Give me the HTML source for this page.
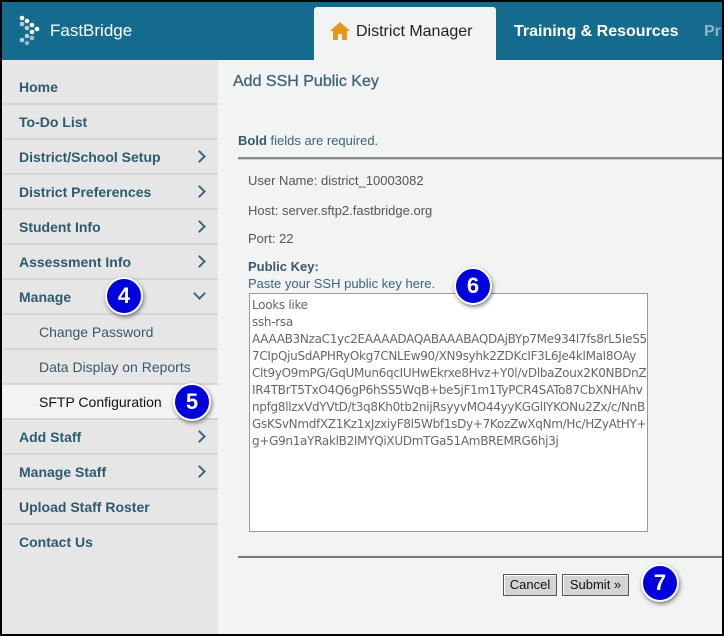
<!DOCTYPE html>
<html><head><meta charset="utf-8"><style>
*{margin:0;padding:0;box-sizing:border-box}
body{width:724px;height:636px;overflow:hidden;background:#000;font-family:"Liberation Sans",sans-serif;position:relative}
#frame{position:absolute;left:2px;top:2px;width:720px;height:632px;background:#f2f3f3;overflow:hidden}
#hdr{position:absolute;left:0;top:0;width:720px;height:58px;background:#156b8e}
.tab{position:absolute;top:5px;left:312px;width:182px;height:53px;background:#f2f3f3;border-radius:3px 3px 0 0}
.abs{position:absolute;white-space:nowrap}
#side{position:absolute;left:0;top:58px;width:216px;height:580px;background:#e6e6e6}
.it{position:absolute;left:0;width:216px;height:35px;border-bottom:2px solid #d6d6d6;font-weight:bold;font-size:14px;color:#2d5a6e;padding-left:17px;line-height:34px}
.sub{font-weight:normal;padding-left:37px;color:#3a5868}
.chev{position:absolute;right:14px;top:12px;width:9px;height:9px;border-right:2px solid #3e6578;border-top:2px solid #3e6578;transform:rotate(45deg)}
.chevd{transform:rotate(135deg);top:9px}
.c{position:absolute;width:38px;height:38px;border-radius:50%;background:#0000dd;border:2px solid #fff;box-shadow:1px 2px 4px rgba(0,0,0,.5);color:#fff;font-size:22px;font-weight:bold;text-align:center;line-height:33px;font-family:"Liberation Sans",sans-serif}
.t{font-size:13px;color:#555}
.btn{position:absolute;height:22px;background:#d4d4d4;border:1px solid #555;box-shadow:inset 1px 1px 0 #fff;font-size:13px;color:#111;text-align:center;line-height:20px}
</style></head><body><div id="frame">
<div id="hdr">
 <svg class="abs" style="left:16px;top:13px" width="26" height="32" viewBox="0 0 26 32">
  <g fill="#fff"><circle cx="4" cy="3" r="2.3"/><circle cx="9" cy="6" r="2.3"/><circle cx="14" cy="10" r="2.3"/><circle cx="19" cy="14" r="2.3"/><circle cx="4" cy="9" r="2.3" opacity=".7"/><circle cx="9" cy="13" r="2.3" opacity=".7"/><circle cx="14" cy="17" r="2.3"/><circle cx="9" cy="21" r="2.3" opacity=".7"/><circle cx="4" cy="25" r="2.3" opacity=".7"/><circle cx="9" cy="28" r="2.3" opacity=".5"/><circle cx="14" cy="23" r="2.3" opacity=".6"/></g></svg>
 <div class="abs" style="left:48px;top:19px;color:#fff;font-size:17px">FastBridge</div>
 <div class="tab"></div>
 <svg class="abs" style="left:328px;top:20px" width="20" height="18" viewBox="0 0 20 18"><path d="M10 0 L20 9 L17 9 L17 18 L12 18 L12 12 L8 12 L8 18 L3 18 L3 9 L0 9 Z" fill="#e8951c"/></svg>
 <div class="abs" style="left:354px;top:21px;font-size:16px;color:#222">District Manager</div>
 <div class="abs" style="left:512px;top:21px;font-size:16px;color:#fff;font-weight:bold">Training &amp; Resources</div>
 <div class="abs" style="left:702px;top:21px;font-size:16px;color:#8fb6c8;font-weight:bold">Pr</div>
</div>
<div id="side">
 <div class="it" style="top:10px">Home</div>
 <div class="it" style="top:45px">To-Do List</div>
 <div class="it" style="top:80px">District/School Setup<span class="chev"></span></div>
 <div class="it" style="top:115px">District Preferences<span class="chev"></span></div>
 <div class="it" style="top:150px">Student Info<span class="chev"></span></div>
 <div class="it" style="top:185px">Assessment Info<span class="chev"></span></div>
 <div class="it" style="top:220px">Manage<span class="chev chevd"></span></div>
 <div class="it sub" style="top:255px">Change Password</div>
 <div class="it sub" style="top:290px">Data Display on Reports</div>
 <div class="it sub" style="top:325px;background:#f3f3f3;color:#111">SFTP Configuration</div>
 <div class="it" style="top:360px">Add Staff<span class="chev"></span></div>
 <div class="it" style="top:395px">Manage Staff<span class="chev"></span></div>
 <div class="it" style="top:430px">Upload Staff Roster</div>
 <div class="it" style="top:465px;border:none">Contact Us</div>
</div>
<div class="abs" style="left:231px;top:71px;font-size:16px;color:#3d6378;-webkit-text-stroke:0.3px #3d6378">Add SSH Public Key</div>
<div class="abs t" style="left:236px;top:131px;color:#3d6378"><b style="color:#2d5a6e">Bold</b> fields are required.</div>
<div class="abs" style="left:236px;top:155px;width:484px;height:3px;border-top:2px solid #8a8a8a;border-bottom:1px solid #ccc"></div>
<div class="abs t" style="left:246px;top:171px">User Name: district_10003082</div>
<div class="abs t" style="left:246px;top:201px">Host: server.sftp2.fastbridge.org</div>
<div class="abs t" style="left:246px;top:229px">Port: 22</div>
<div class="abs t" style="left:246px;top:257px;font-weight:bold;color:#3d5868">Public Key:</div>
<div class="abs t" style="left:246px;top:274px;color:#3d6378">Paste your SSH public key here.</div>
<div class="abs" style="left:247px;top:291px;width:399px;height:239px;background:#fff;border:1px solid #999;padding:3px 2px;font-family:'DejaVu Sans',Verdana,sans-serif;font-size:12px;line-height:17px;color:#666;letter-spacing:-0.3px;overflow:hidden">Looks like<br>ssh-rsa<br>AAAAB3NzaC1yc2EAAAADAQABAAABAQDAjBYp7Me934I7fs8rL5IeS5<br>7CIpQjuSdAPHRyOkg7CNLEw90/XN9syhk2ZDKcIF3L6Je4klMaI8OAy<br>Clt9yO9mPG/GqUMun6qcIUHwEkrxe8Hvz+Y0l/vDlbaZoux2K0NBDnZ<br>IR4TBrT5TxO4Q6gP6hSS5WqB+be5jF1m1TyPCR4SATo87CbXNHAhv<br>npfg8llzxVdYVtD/t3q8Kh0tb2nijRsyyvMO44yyKGGlIYKONu2Zx/c/NnB<br>GsKSvNmdfXZ1Kz1xJzxiyF8l5Wbf1sDy+7KozZwXqNm/Hc/HZyAtHY+<br>g+G9n1aYRaklB2IMYQiXUDmTGa51AmBREMRG6hj3j</div>
<div class="abs" style="left:236px;top:554px;width:484px;height:3px;border-top:2px solid #777"></div>
<div class="btn" style="left:501px;top:572px;width:54px">Cancel</div>
<div class="btn" style="left:560px;top:572px;width:67px">Submit »</div>
<div class="c" style="left:103px;top:275px">4</div>
<div class="c" style="left:171px;top:381px">5</div>
<div class="c" style="left:452px;top:265px">6</div>
<div class="c" style="left:639px;top:562px">7</div>
</div></body></html>
